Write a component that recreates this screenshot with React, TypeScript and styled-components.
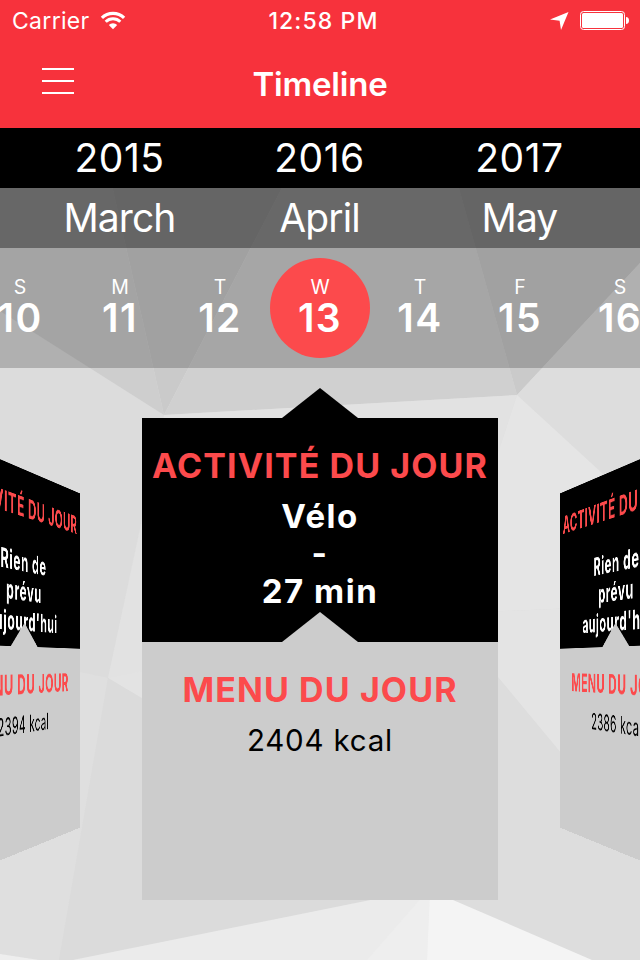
import * as React from 'react';
import styled, { createGlobalStyle } from 'styled-components';

const GlobalStyle = createGlobalStyle`
  *, *::before, *::after {
    box-sizing: border-box;
  }

  body {
    margin: 0;
    font-family: Inter, 'Liberation Sans', sans-serif;
    -webkit-font-smoothing: antialiased;
  }
`;

const days = [
  { letter: 'S', date: 10 },
  { letter: 'M', date: 11 },
  { letter: 'T', date: 12 },
  { letter: 'W', date: 13 },
  { letter: 'T', date: 14 },
  { letter: 'F', date: 15 },
  { letter: 'S', date: 16 },
];

const shapes = [
  { fill: '#dcdcdc', points: '0,311 164,415 108,678 80,673 0,655' },
  { fill: '#cecece', points: '0,128 99,128 164,415 0,311' },
  { fill: '#cacaca', points: '99,128 313,128 164,415' },
  { fill: '#d0d0d0', points: '313,128 442,128 517,395 164,415' },
  { fill: '#cacaca', points: '442,128 640,128 640,263 517,395' },
  { fill: '#dddddd', points: '517,395 640,263 640,508' },
  { fill: '#e2e2e2', points: '164,415 517,395 480,508 440,680 108,678' },
  { fill: '#dcdcdc', points: '108,678 164,415 142,418 142,520' },
  { fill: '#e5e5e5', points: '517,395 640,508 640,605 440,614 480,508' },
  { fill: '#e4e4e4', points: '440,614 640,605 640,850 440,607' },
  { fill: '#e3e3e3', points: '108,678 200,660 200,733' },
  { fill: '#dfdfdf', points: '0,655 108,678 59,960 39,960 0,954' },
  { fill: '#dbdbdb', points: '108,678 200,733 430,760 430,888 73,960 59,960' },
  { fill: '#dddddd', points: '430,595 640,848 640,981 592,960 430,890' },
  { fill: '#ebebeb', points: '430,888 430,960 73,960' },
  { fill: '#eeeeee', points: '430,888 427,960 367,960' },
  { fill: '#f4f4f4', points: '430,890 453,900 592,960 427,960' },
  { fill: '#eeeeee', points: '0,954 39,960 0,960' },
];

const Backdrop = () => (
  <Mesh viewBox="0 0 640 960" aria-hidden="true">
    <rect width="640" height="960" fill="#dddddd" />
    {shapes.map(({ fill, points }) => (
      <polygon key={points} fill={fill} points={points} />
    ))}
  </Mesh>
);

const WifiIcon = () => (
  <svg width="26" height="20" viewBox="0 0 26 20" fill="none">
    <path d="M1.9 6.9a15.7 15.7 0 0 1 22.2 0" stroke="white" strokeWidth="3.2" />
    <path d="M5.7 10.7a10.3 10.3 0 0 1 14.6 0" stroke="white" strokeWidth="3" />
    <path d="M13 18.2l-4.2-4.2a5.9 5.9 0 0 1 8.4 0z" fill="white" />
  </svg>
);

const LocationIcon = () => (
  <svg width="19" height="18" viewBox="0 0 19 18">
    <path d="M18.5 0L11 18L9.6 8.8L0 7.6z" fill="white" />
  </svg>
);

const BatteryIcon = () => (
  <svg width="50" height="20" viewBox="0 0 50 20">
    <rect x="0.5" y="0.5" width="44" height="18" rx="3" fill="none" stroke="white" />
    <rect x="2" y="2" width="41" height="15" rx="1.5" fill="white" />
    <path d="M46 6c2 0 3 1.4 3 3.5s-1 3.5-3 3.5z" fill="white" />
  </svg>
);

const DayCard = ({ side, activity, energy }: CardProps) => (
  <Card $side={side}>
    <Pointer $color={side ? 'transparent' : '#000'} />
    <Activity>
      <CardTitle>ACTIVITÉ DU JOUR</CardTitle>
      <Lines $low={Boolean(side)}>
        {activity.map((line) => (
          <span key={line}>{line}</span>
        ))}
      </Lines>
    </Activity>
    <Menu>
      <MenuPointer $color="#ccc" />
      <CardTitle>MENU DU JOUR</CardTitle>
      <Energy>{energy}</Energy>
    </Menu>
  </Card>
);

export default function App() {
  return (
    <>
      <GlobalStyle />
      <Screen>
        <Backdrop />
        <Header>
          <StatusBar>
            <Carrier>
              Carrier
              <WifiIcon />
            </Carrier>
            <Clock>12:58 PM</Clock>
            <Indicators>
              <LocationIcon />
              <BatteryIcon />
            </Indicators>
          </StatusBar>
          <NavBar>
            <MenuButton aria-label="Menu">
              <i />
              <i />
              <i />
            </MenuButton>
            <Title>Timeline</Title>
          </NavBar>
        </Header>
        <Years>
          <Period>2015</Period>
          <Period>2016</Period>
          <Period>2017</Period>
        </Years>
        <Months>
          <Period>March</Period>
          <Period>April</Period>
          <Period>May</Period>
        </Months>
        <Days>
          {days.map(({ letter, date }) => (
            <Day key={date} $selected={date === 13}>
              <Letter>{letter}</Letter>
              <DateNumber>{date}</DateNumber>
            </Day>
          ))}
        </Days>
        <Carousel>
          <DayCard side="left" activity={['Rien de', 'prévu', "aujourd'hui"]} energy="2394 kcal" />
          <DayCard side="right" activity={['Rien de', 'prévu', "aujourd'hui"]} energy="2386 kcal" />
          <DayCard activity={['Vélo', '-', '27 min']} energy="2404 kcal" />
        </Carousel>
      </Screen>
    </>
  );
}

type Side = 'left' | 'right';

interface CardProps {
  side?: Side;
  activity: string[];
  energy: string;
}

const sideTransform = {
  left: 'translate3d(-374px, 0, -266px) rotateY(81deg)',
  right: 'translate3d(374px, 0, -266px) rotateY(-81deg)',
};

const Screen = styled.main`
  position: relative;
  isolation: isolate;
  display: flex;
  flex-direction: column;
  width: 640px;
  height: 960px;
  overflow: hidden;
  color: white;
`;

const Mesh = styled.svg`
  position: absolute;
  inset: 0;
  z-index: -1;
`;

const Header = styled.header`
  height: 128px;
  background-color: #f7323c;
`;

const StatusBar = styled.div`
  display: grid;
  grid-template-columns: 1fr auto 1fr;
  align-items: center;
  height: 41px;
  padding: 1px 10px 0 12px;
  font-size: 23px;
  line-height: 40px;
`;

const Carrier = styled.div`
  display: flex;
  align-items: center;
  gap: 10px;
  letter-spacing: 0.3px;
`;

const Clock = styled.div`
  padding-left: 5px;
  font-weight: 500;
  letter-spacing: 1.1px;
`;

const Indicators = styled.div`
  display: flex;
  align-items: center;
  justify-content: flex-end;
  gap: 11px;
`;

const NavBar = styled.nav`
  display: grid;
  grid-template-columns: 1fr auto 1fr;
  align-items: center;
  height: 87px;
  padding: 0 42px 1px;
`;

const MenuButton = styled.button`
  display: flex;
  flex-direction: column;
  gap: 10px;
  width: 32px;
  padding: 0;
  margin-top: -6px;
  border: 0;
  background: none;

  & > i {
    width: 32px;
    height: 2px;
    background-color: white;
  }
`;

const Title = styled.h1`
  margin: 0;
  font-size: 33px;
  font-weight: 600;
  letter-spacing: -0.2px;
`;

const Strip = styled.div`
  display: flex;
  flex: none;
  justify-content: center;
`;

const Period = styled.div`
  flex: none;
  width: 200px;
  padding-right: 1px;
  font-size: 39px;
  line-height: 60px;
  text-align: center;
`;

const Years = styled(Strip)`
  height: 60px;
  background-color: #000;
  letter-spacing: 0.5px;
`;

const Months = styled(Strip)`
  height: 60px;
  background-color: rgba(0, 0, 0, 0.5);
  letter-spacing: -0.9px;
`;

const Days = styled(Strip)`
  align-items: center;
  height: 120px;
  background-color: rgba(0, 0, 0, 0.2);
`;

const Day = styled.div<{ $selected: boolean }>`
  display: flex;
  flex: none;
  flex-direction: column;
  align-items: center;
  width: 100px;
  height: 100px;
  padding-top: 18px;
  border-radius: 50%;
  background-color: ${({ $selected }) => ($selected ? '#fc4a4c' : 'transparent')};
`;

const Letter = styled.span`
  font-size: 19.5px;
  line-height: 22px;
`;

const DateNumber = styled.span`
  font-size: 39px;
  font-weight: 600;
  line-height: 40px;
  letter-spacing: 1.4px;
`;

const Carousel = styled.section`
  display: grid;
  flex: 1;
  justify-content: center;
  align-content: start;
  padding-top: 20px;
  overflow: hidden;
  perspective: 1000px;
`;

const Card = styled.article<{ $side?: Side }>`
  grid-area: 1 / 1;
  width: 356px;
  transform: ${({ $side }) => ($side ? sideTransform[$side] : 'none')};
`;

const Pointer = styled.div<{ $color: string }>`
  width: 76px;
  height: 30px;
  margin: 0 auto;
  background-color: ${({ $color }) => $color};
  clip-path: polygon(50% 0, 100% 100%, 0 100%);
`;

const Activity = styled.div`
  height: 224px;
  padding-top: 28px;
  background-color: #000;
`;

const Menu = styled.div`
  height: 258px;
  background-color: #ccc;
`;

const MenuPointer = styled(Pointer)`
  position: relative;
  top: -30px;
  margin-bottom: -2px;
`;

const CardTitle = styled.h2`
  margin: 0;
  color: #fc4a4c;
  font-size: 34px;
  font-weight: 700;
  line-height: 40px;
  letter-spacing: 1.1px;
  text-align: center;
  white-space: nowrap;
`;

const Lines = styled.p<{ $low: boolean }>`
  display: flex;
  flex-direction: column;
  align-items: center;
  margin: ${({ $low }) => ($low ? '31px' : '12px')} 0 0;
  font-size: 33px;
  font-weight: 700;
  line-height: 37.4px;
  letter-spacing: 1.5px;
`;

const Energy = styled.p`
  margin: 10px 0 0;
  color: #000;
  font-size: 29.5px;
  line-height: 40px;
  letter-spacing: 0.8px;
  text-align: center;
`;
